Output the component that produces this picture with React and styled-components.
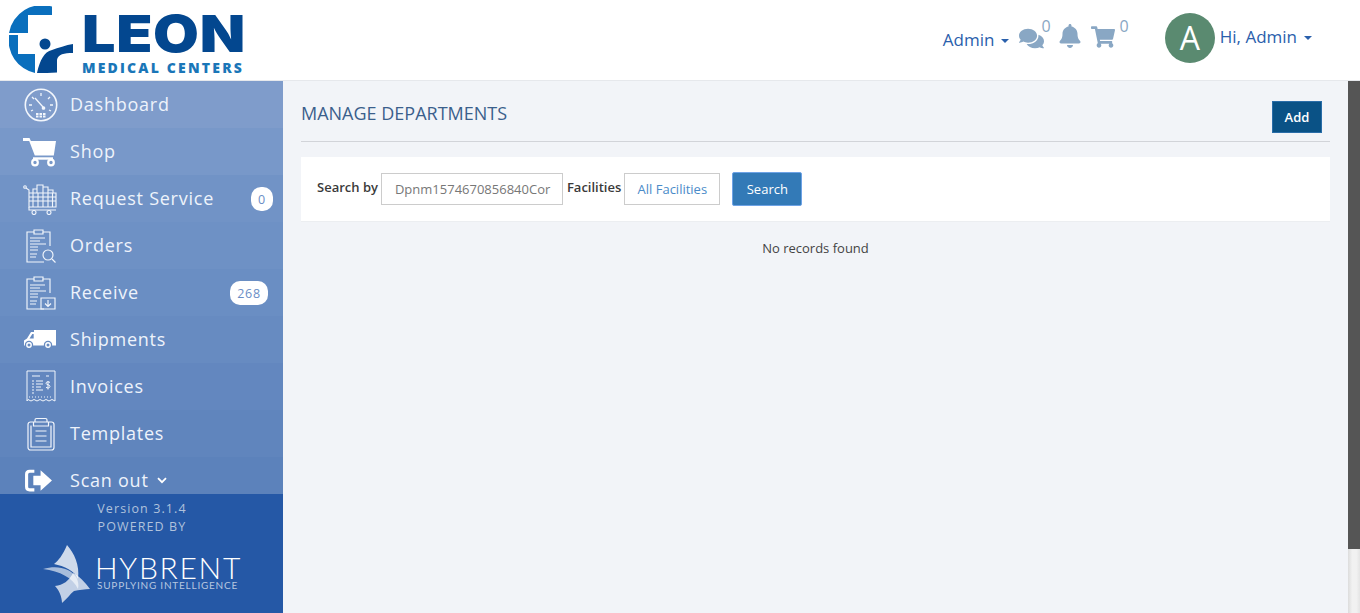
import React from "react";
import styled, { createGlobalStyle } from "styled-components";
import { FaComments, FaBell, FaShoppingCart } from "react-icons/fa";

const Global = createGlobalStyle`
  html, body { margin: 0; padding: 0; height: 613px; overflow: hidden; background: #f2f4f8; }
  * { box-sizing: border-box; }
  body { font-family: "Open Sans", "Liberation Sans", sans-serif; }
`;

const Page = styled.div`display: flex; flex-direction: column; width: 1360px; height: 613px;`;
const Header = styled.header`
  height: 81px; flex: none; display: flex; align-items: flex-start; justify-content: space-between;
  background: #fff; border-bottom: 1px solid #e6e8ec;
`;
const Brand = styled.div`display: flex; padding: 6px 0 0 9px; gap: 8px;`;
const BrandText = styled.div`display: flex; flex-direction: column; width: 162px;`;
const BrandName = styled.div`
  font-family: Inter, "Liberation Sans", sans-serif; font-weight: 900; font-size: 51px; line-height: 51px;
  letter-spacing: 0.6px; color: #03478f; margin-top: 2px; white-space: nowrap;
  transform: scaleX(1.16); transform-origin: left center;
`;
const BrandSub = styled.div`
  font-family: "Open Sans", sans-serif; font-weight: 800; font-size: 14px; line-height: 14px;
  letter-spacing: 2.18px; color: #1a76b8; margin-top: 2px; white-space: nowrap;
`;
const TopNav = styled.nav`display: flex; align-items: flex-start; padding: 13px 48px 0 0;`;
const NavLink = styled.span`
  font-size: 17px; line-height: 24px; color: #2a60ac; display: inline-flex; align-items: center; white-space: nowrap;
  margin-top: ${p => p.$top || 0}px;
`;
const Caret = styled.i`
  display: inline-block; width: 0; height: 0; margin-left: 7px; margin-top: 2px;
  border-left: 4px solid transparent; border-right: 4px solid transparent; border-top: 4px solid #2a60ac;
`;
const IconWrap = styled.span`
  display: inline-flex; color: #89a7c4; margin-left: ${p => p.$left}px; margin-top: ${p => p.$top}px; font-size: ${p => p.$size}px;
`;
const Count = styled.span`
  font-size: 16px; line-height: 18px; color: #89a7c4; margin-left: ${p => p.$left}px; margin-top: 4px; display: block;
`;
const Avatar = styled.div`
  width: 50px; height: 50px; border-radius: 50%; background: #5a8a70; color: #fff; margin-left: 36px; margin-right: 5px; flex: none;
  display: flex; align-items: center; justify-content: center; font-size: 32px; line-height: 1;
`;
const Body = styled.div`display: flex; flex: 1; min-height: 0;`;
const Sidebar = styled.aside`width: 283px; flex: none; display: flex; flex-direction: column; background: #2558a6;`;
const Menu = styled.div`height: 413px; overflow: hidden; flex: none;`;
const Row = styled.div`
  height: 47px; display: flex; align-items: center; position: relative; padding-left: 22px; color: #fff;
  background: ${p => p.$bg};
`;
const RowIcon = styled.span`width: 38px; height: 36px; display: flex; align-items: center; justify-content: center; flex: none; margin-right: 10px;`;
const RowLabel = styled.span`font-size: 18px; letter-spacing: 0.76px; color: #eef3fb; line-height: 24px; margin-top: -2px; white-space: nowrap; display: inline-flex; align-items: center;`;
const Badge = styled.span`
  position: absolute; right: ${p => p.$right}px; top: 12px; height: 24px; min-width: 22px; padding: 0 7px; border-radius: 10px;
  background: #fff; color: #6a8ec6; font-size: 12.5px; letter-spacing: 0.8px; display: flex; align-items: center; justify-content: center;
`;
const SideFoot = styled.div`flex: 1; display: flex; flex-direction: column; align-items: center; background: #2558a6;`;
const FootLine = styled.div`font-size: 12.5px; letter-spacing: 1.1px; line-height: 18px; color: #b0c2dc; margin-left: 1px;`;
const VersionLine = styled(FootLine)`margin-top: 6px;`;
const HybrentLogo = styled.div`display: flex; align-items: flex-start; margin-top: 9px; margin-left: 2px;`;
const HybrentText = styled.div`display: flex; flex-direction: column; margin-left: 5px; margin-top: 9px;`;
const HybrentName = styled.div`font-family: Lato, sans-serif; font-weight: 300; font-size: 30px; line-height: 27px; letter-spacing: 1.7px; color: #fff;`;
const HybrentSub = styled.div`font-family: Lato, sans-serif; font-size: 10px; line-height: 11px; margin: -1px 0 0 2px; letter-spacing: 0.78px; color: #b6c7e0; white-space: nowrap;`;
const Main = styled.main`flex: 1; background: #f2f4f8; padding: 0 18px; min-width: 0;`;
const TitleBar = styled.div`
  height: 61px; display: flex; align-items: flex-start; justify-content: space-between; border-bottom: 1px solid #d2d4d9; padding: 20px 8px 0 0;
`;
const Title = styled.h1`margin: 0; font-size: 18px; font-weight: 400; line-height: 24px; color: #3b5f8c;`;
const AddButton = styled.button`
  width: 50px; height: 32px; background: #0a5286; border: 1px solid #2a6da8; color: #fff; font: 600 13px "Open Sans", sans-serif; padding: 0;
`;
const Panel = styled.div`
  margin-top: 15px; height: 65px; background: #fff; border-bottom: 1px solid #eceef1; display: flex; align-items: flex-start; padding: 16px 0 0 16px;
`;
const FieldLabel = styled.label`font-size: 13px; font-weight: 600; line-height: 18px; color: #3a3a3a; margin-top: 5px; margin-right: ${p => p.$gap}px;`;
const SearchInput = styled.div`
  width: 182px; height: 32px; border: 1px solid #ccc; background: #fff; color: #777; font-size: 13px; line-height: 31px; padding-left: 13px; overflow: hidden; white-space: nowrap; margin-right: 4px;
`;
const FacilityButton = styled.div`
  width: 96px; height: 32px; border: 1px solid #ccc; background: #fff; color: #4a8bc9; font-size: 13px; line-height: 31px; text-align: center; margin-right: 12px;
`;
const SearchButton = styled.button`
  width: 70px; height: 34px; margin-top: -1px; background: #337ab7; border: 1px solid #6ea3e6; border-radius: 2px; color: #fff; font: 500 13px "Open Sans", sans-serif; padding: 0;
`;
const Empty = styled.div`text-align: center; font-size: 13px; line-height: 18px; color: #444; margin-top: 17px;`;
const ScrollTrack = styled.div`
  width: 12px; flex: none; display: flex; flex-direction: column;
  background: linear-gradient(90deg, #dcdcdc, #f1f1f1 35%, #f1f1f1 70%, #e4e4e4);
`;
const ScrollThumb = styled.div`height: 468px; background: #555; flex: none;`;

const S = { fill: "none", stroke: "#f2f6fc", strokeWidth: 1.3 };

const Gauge = () => (
  <svg width="34" height="34" viewBox="0 0 34 34" {...S}>
    <circle cx="17" cy="17" r="15.7" strokeWidth="1.6" />
    <path d="M11 10l8 9M17 5v3M8 9l2 2M5 17h3M26 9l-2 2M29 17h-3M7 23l2-1M27 23l-2-1" />
    <circle cx="19.5" cy="20" r="1.2" fill="#f2f6fc" />
    <path d="M12 26h10M12 28.500h10" strokeWidth="2.200" strokeDasharray="2.500 1" />
  </svg>
);
const Cart = () => (
  <svg width="34" height="30" viewBox="0 0 34 30" style={{ marginLeft: -2 }}>
    <path d="M0 1h6.500l1.400 3H33l-2.200 14.500H11.800L6.200 4H0z" fill="#fff" />
    <path d="M10 21.500h20" stroke="#fff" strokeWidth="2.400" />
    <circle cx="12" cy="25.500" r="2.800" fill="none" stroke="#fff" strokeWidth="2.200" />
    <circle cx="28" cy="25.500" r="2.800" fill="none" stroke="#fff" strokeWidth="2.200" />
  </svg>
);
const Basket = () => (
  <svg width="34" height="33" viewBox="0 0 34 33" {...S} strokeWidth="1.100" style={{ marginLeft: -3 }}>
    <circle cx="2" cy="5" r="1.300" />
    <path d="M3 6l3 2v17h27V11H6M6 15h27M6 19h27M10 11v14M15 11v14M20 11v14M25 11v14M29.500 11v14" />
    <path d="M14 11V3h6v8M20 5h5v6M25 8h5v3M10 11V7h4" />
    <path d="M6 25v3h27" />
    <circle cx="11" cy="30.500" r="2" /><circle cx="26" cy="30.500" r="2" />
  </svg>
);
const Clipboard = ({ children }) => (
  <svg width="32" height="34" viewBox="0 0 32 34" {...S} strokeWidth="1.150">
    <path d="M19 33H2V3h7V1h9v2h7v14" />
    <path d="M9 3v2h9V3" />
    <path d="M5 9h15M5 12h10M5 15h16M5 18h8M5 21h8M5 25h7M5 28h6" />
    {children}
  </svg>
);
const Orders = () => (
  <Clipboard>
    <circle cx="23" cy="26" r="5" /><path d="M27 30l3.500 3.500" />
  </Clipboard>
);
const Receive = () => (
  <Clipboard>
    <path d="M16 22h14v11H16zM23 24v6M20 27.500l3 3 3-3" />
  </Clipboard>
);
const Truck = () => (
  <svg width="34" height="20" viewBox="0 0 34 20" style={{ marginLeft: -2 }}>
    <path d="M11 0h22v15.500H1V10.500l3-2 4-6.500h3z" fill="#fff" />
    <path d="M6.500 8.500l2.800-4.500h1.400v4.500z" fill="#678bc1" />
    <circle cx="6" cy="15" r="4.200" fill="#678bc1" />
    <circle cx="25" cy="15" r="4.200" fill="#678bc1" />
    <circle cx="6" cy="15" r="2.200" fill="none" stroke="#fff" strokeWidth="1.400" />
    <circle cx="25" cy="15" r="2.200" fill="none" stroke="#fff" strokeWidth="1.400" />
  </svg>
);
const Invoice = () => (
  <svg width="30" height="34" viewBox="0 0 30 34" {...S} strokeWidth="1">
    <path d="M1 31V1h28v30l-3-1.500-3 1.500-3-1.500-3 1.500-3-1.500-3 1.500-3-1.500-3 1.500-3-1.500z" />
    <path d="M6 6h8M20 6h3M6 11h2M10 11h7M6 14h2M10 14h7M6 17h2M10 17h5M6 20h2M10 20h7M6 23h2" />
    <path d="M3 27h24" strokeDasharray="1 2" />
    <path d="M24 12.500c-1-1-4-1-4 .8s4 1 4 3-3 2-4 1M22 11v8.500" />
  </svg>
);
const Board = () => (
  <svg width="28" height="34" viewBox="0 0 28 34" {...S} strokeWidth="1.200">
    <rect x="1" y="5" width="26" height="28" rx="2.500" />
    <path d="M4 8.500v21.500h20V8.500" />
    <path d="M8 5V3q0-1.500 1.500-1.500h9Q20 1.500 20 3v2M6.500 5v4h15V5" />
    <path d="M8.500 14h11M8.500 19h11M8.500 24h11" />
  </svg>
);
const SignOut = () => (
  <svg width="29" height="25" viewBox="0 0 28 24" style={{ marginLeft: -5 }}>
    <path d="M10 3H5.500Q2.500 3 2.500 6v12q0 3 3 3H10" fill="none" stroke="#fff" strokeWidth="3" />
    <path d="M9 7.500h7V2l11 10-11 10v-5.500H9z" fill="#fff" />
  </svg>
);
const Chevron = () => (
  <svg width="10" height="7" viewBox="0 0 10 7" style={{ marginLeft: 8, marginTop: 1 }}>
    <path d="M1 1.200l4 4 4-4" fill="none" stroke="#fff" strokeWidth="1.800" />
  </svg>
);
const LeonMark = () => (
  <svg width="65" height="68" viewBox="9 6 65 68">
    <path d="M9 33h19V15h24V6.600A33.500 33.500 0 0 0 9 33z" fill="#0a6fbd" />
    <path d="M9 35h9v19h17v19A33.500 33.500 0 0 1 9 35z" fill="#0a6fbd" />
    <circle cx="45" cy="44" r="5.500" fill="#03478f" />
    <path d="M37 73C40 60 44 52 52 50 58 48 66 45 73 44v9C64 53 58 54 57 60v12.500C50 73 44 73 37 73z" fill="#03478f" />
  </svg>
);
const HybrentMark = () => (
  <svg width="47" height="58" viewBox="0 0 47 58">
    <path d="M24 0C20 10 15 16 11 19c10 2 21 7 24 15C37 20 31 8 24 0z" fill="#fff" fillOpacity=".78" />
    <path d="M0 24c14-4 27-1 33 8 2 3 3 8 2 12C30 33 17 26 0 24z" fill="#fff" fillOpacity=".6" />
    <path d="M12 41c8-1 14-5 18-13 6 3 12 9 17 16-5 0-11 1-16 2-4 3-7 8-12 12 0-6-3-13-7-17z" fill="#fff" fillOpacity=".72" />
  </svg>
);

const items = [
  { label: "Dashboard", icon: <Gauge />, bg: "#7f9ccb" },
  { label: "Shop", icon: <Cart />, bg: "#7898c9" },
  { label: "Request Service", icon: <Basket />, bg: "#7193c6", badge: "0", right: 10 },
  { label: "Orders", icon: <Orders />, bg: "#6e91c5" },
  { label: "Receive", icon: <Receive />, bg: "#6a8ec3", badge: "268", right: 15 },
  { label: "Shipments", icon: <Truck />, bg: "#678bc1" },
  { label: "Invoices", icon: <Invoice />, bg: "#6387bf" },
  { label: "Templates", icon: <Board />, bg: "#6085bd" },
  { label: "Scan out", icon: <SignOut />, bg: "#5c82bb", chevron: true },
];

export default function App() {
  return (
    <Page>
      <Global />
      <Header>
        <Brand>
          <LeonMark />
          <BrandText>
            <BrandName>LEON</BrandName>
            <BrandSub>MEDICAL CENTERS</BrandSub>
          </BrandText>
        </Brand>
        <TopNav>
          <NavLink $top={15}>Admin<Caret /></NavLink>
          <IconWrap $left={10} $top={13} $size={25}><FaComments /></IconWrap>
          <Count $left={-3}>0</Count>
          <IconWrap $left={7} $top={11} $size={24}><FaBell /></IconWrap>
          <IconWrap $left={9} $top={12} $size={24}><FaShoppingCart /></IconWrap>
          <Count $left={5}>0</Count>
          <Avatar>A</Avatar>
          <NavLink $top={12}>Hi, Admin<Caret /></NavLink>
        </TopNav>
      </Header>
      <Body>
        <Sidebar>
          <Menu>
            {items.map(it => (
              <Row key={it.label} $bg={it.bg}>
                <RowIcon>{it.icon}</RowIcon>
                <RowLabel>{it.label}{it.chevron && <Chevron />}</RowLabel>
                {it.badge && <Badge $right={it.right}>{it.badge}</Badge>}
              </Row>
            ))}
          </Menu>
          <SideFoot>
            <VersionLine>Version 3.1.4</VersionLine>
            <FootLine>POWERED BY</FootLine>
            <HybrentLogo>
              <HybrentMark />
              <HybrentText>
                <HybrentName>HYBRENT</HybrentName>
                <HybrentSub>SUPPLYING INTELLIGENCE</HybrentSub>
              </HybrentText>
            </HybrentLogo>
          </SideFoot>
        </Sidebar>
        <Main>
          <TitleBar>
            <Title>MANAGE DEPARTMENTS</Title>
            <AddButton>Add</AddButton>
          </TitleBar>
          <Panel>
            <FieldLabel $gap={3}>Search by</FieldLabel>
            <SearchInput>Dpnm1574670856840Cor</SearchInput>
            <FieldLabel $gap={3}>Facilities</FieldLabel>
            <FacilityButton>All Facilities</FacilityButton>
            <SearchButton>Search</SearchButton>
          </Panel>
          <Empty>No records found</Empty>
        </Main>
        <ScrollTrack><ScrollThumb /></ScrollTrack>
      </Body>
    </Page>
  );
}
